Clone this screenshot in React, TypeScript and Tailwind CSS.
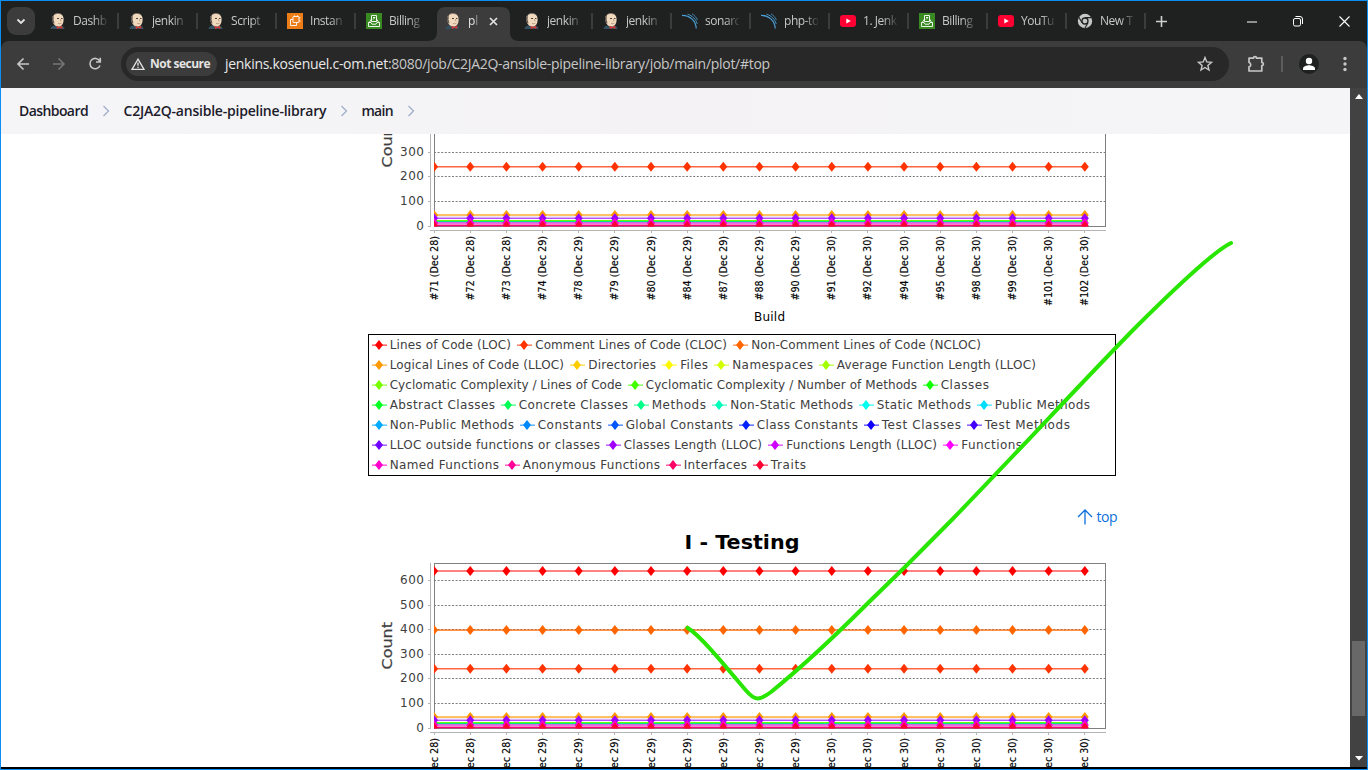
import React from "react";

const BUILDS = [
  "#71 (Dec 28)", "#72 (Dec 28)", "#73 (Dec 28)", "#74 (Dec 29)", "#78 (Dec 29)", "#79 (Dec 29)", "#80 (Dec 29)",
  "#84 (Dec 29)", "#87 (Dec 29)", "#88 (Dec 29)", "#90 (Dec 29)", "#91 (Dec 30)", "#92 (Dec 30)", "#94 (Dec 30)",
  "#95 (Dec 30)", "#98 (Dec 30)", "#99 (Dec 30)", "#101 (Dec 30)", "#102 (Dec 30)",
];

type Series = { h: number; color: string; w: number; marker: boolean; o: number };

// h is the height of the series above the zero line, in chart pixels
const SERIES: Series[] = [
  { h: 157.5, color: "#ff0000", w: 1.6, marker: true, o: 0.65 },
  { h: 59.7, color: "#ff3300", w: 1.6, marker: true, o: 0.75 },
  { h: 98.4, color: "#ff6600", w: 1.6, marker: true, o: 0.7 },
  { h: 11.5, color: "#ff9900", w: 1.8, marker: true, o: 0.6 },
  { h: 6, color: "#66ff00", w: 1.2, marker: false, o: 1 },
  { h: 5, color: "#00e68a", w: 1.2, marker: false, o: 1 },
  { h: 9.4, color: "#c8a0e8", w: 1, marker: false, o: 0.7 },
  { h: 8.2, color: "#9900ff", w: 1.2, marker: true, o: 0.7 },
  { h: 3.6, color: "#b050e0", w: 1.4, marker: false, o: 0.9 },
  { h: 3.4, color: "#ff00cc", w: 1, marker: true, o: 0.6 },
  { h: 1, color: "#ff0080", w: 2, marker: false, o: 1 },
  { h: 0.8, color: "#ff0033", w: 0, marker: true, o: 1 },
];

type Item = [marker: number, start: number, end: number, label: string, color: string];

const LEGEND: Item[][] = [
  [
    [379, 390, 510.5, "Lines of Code (LOC)", "#ff0000"],
    [524, 535.5, 726.5, "Comment Lines of Code (CLOC)", "#ff3300"],
    [740, 751.5, 980.5, "Non-Comment Lines of Code (NCLOC)", "#ff6600"],
  ],
  [
    [379, 390, 563.5, "Logical Lines of Code (LLOC)", "#ff9900"],
    [577, 588.5, 655.5, "Directories", "#ffcc00"],
    [669, 680.5, 707.5, "Files", "#fff700"],
    [721, 732.5, 812.5, "Namespaces", "#d4ff00"],
    [826, 837, 1035.5, "Average Function Length (LLOC)", "#a2ff00"],
  ],
  [
    [379, 390, 621.5, "Cyclomatic Complexity / Lines of Code", "#77ff00"],
    [635, 646, 916.5, "Cyclomatic Complexity / Number of Methods", "#44ff00"],
    [930, 941, 988.5, "Classes", "#11ff00"],
  ],
  [
    [379, 390, 494.5, "Abstract Classes", "#00ff22"],
    [508, 519, 627.5, "Concrete Classes", "#00ff55"],
    [641, 652, 705.5, "Methods", "#00ff88"],
    [719, 730.5, 852.5, "Non-Static Methods", "#00ffbb"],
    [866, 877, 970.5, "Static Methods", "#00ffee"],
    [984, 995, 1089.5, "Public Methods", "#00ddff"],
  ],
  [
    [379, 390, 513.5, "Non-Public Methods", "#00aaff"],
    [527, 538, 601.5, "Constants", "#0088ff"],
    [615, 626, 732.5, "Global Constants", "#0055ff"],
    [746, 757, 857.5, "Class Constants", "#0022ff"],
    [871, 882, 960.5, "Test Classes", "#1100ff"],
    [974, 985, 1069.5, "Test Methods", "#4400ff"],
  ],
  [
    [379, 390, 599.5, "LLOC outside functions or classes", "#7000ff"],
    [613, 624, 761.5, "Classes Length (LLOC)", "#a200ff"],
    [775, 786.5, 936.5, "Functions Length (LLOC)", "#d000ff"],
    [950, 961.5, 1021.5, "Functions", "#ff00ff"],
  ],
  [
    [379, 390, 498.5, "Named Functions", "#ff00cc"],
    [512, 523, 659.5, "Anonymous Functions", "#ff0099"],
    [673, 684, 746.5, "Interfaces", "#ff0066"],
    [760, 771, 805.5, "Traits", "#ff0033"],
  ],
];

const DIAMOND = "M0 -5 L4 0 L0 5 L-4 0Z";

/** One plot image; its own origin is 368px left of the page and its zero line is at y = 198.5. */
function Plot({ id, title }: { id: string; title?: string }) {
  const zero = 198.5;
  const px = (i: number) => 66.1 + i * 36.15;
  return (
    <svg width="748" height="448" viewBox="0 0 748 448" className="block shrink-0" fontFamily="'DejaVu Sans', sans-serif">
      <defs>
        <clipPath id={id}>
          <rect x="66" y="33" width="672" height="165.5" />
        </clipPath>
      </defs>
      {title && (
        <text x="316.500" y="19" fontSize="20" fontWeight="700" textLength="115" lengthAdjust="spacingAndGlyphs">{title}</text>
      )}
      <text transform="translate(24 139.5) rotate(-90)" fontSize="14" fill="#404040" stroke="#404040" strokeWidth="0.2" textLength="47.500" lengthAdjust="spacingAndGlyphs">Count</text>
      <path d={`M62.5 33V${zero + 0.5}`} stroke="#b4b4b4" />
      <path d="M62 202.5H738" stroke="#b4b4b4" />
      {[0, 25, 50, 74, 99, 123, 148].map((d, i) => (
        <g key={d}>
          <path d={`M60 ${zero - d}H62`} stroke="#b4b4b4" />
          {i > 0 && <path d={`M66 ${zero - d}H738`} stroke="#7c7c7c" strokeDasharray="2 1.6" />}
          <text x="56" y={zero - d + 3.5} fontSize="12" fill="#404040" textAnchor="end" textLength={i ? 24 : 7.8}>{i * 100}</text>
        </g>
      ))}
      <rect x="66.5" y="33.5" width="671" height="165" fill="none" stroke="#808080" />
      <g clipPath={`url(#${id})`}>
        {SERIES.map((s, k) => (
          <g key={k}>
            {s.w > 0 && <path d={`M66.5 ${zero - s.h}H${px(18) + 3}`} stroke={s.color} strokeWidth={s.w} opacity={s.o} />}
            {s.marker && BUILDS.map((_, i) => (
              <path key={i} d={DIAMOND} fill={s.color} transform={`translate(${px(i)} ${zero - s.h})`} />
            ))}
          </g>
        ))}
      </g>
      {BUILDS.map((b, i) => (
        <g key={b}>
          <path d={`M${Math.floor(px(i)) + 0.5} 203V205`} stroke="#b4b4b4" />
          <text transform={`translate(${px(i) + 3.5} ${b.length > 12 ? 278 : 272.5}) rotate(-90)`} fontSize="10" stroke="#000" strokeWidth="0.15" lengthAdjust="spacingAndGlyphs" textLength={b.length > 12 ? 70 : 64.5}>{b}</text>
        </g>
      ))}
      <text x="386" y="293" fontSize="12" textLength="31">Build</text>
      <rect x="0.5" y="306.5" width="747" height="141" fill="#fff" stroke="#000" />
      {LEGEND.map((row, r) =>
        row.map(([m, s, e, label, color]) => (
          <g key={label} transform={`translate(-368 ${r * 20})`}>
            <path d={`M${m - 7} 317.2H${m + 8}`} stroke={color} strokeWidth="1.6" opacity="0.6" />
            <path d={DIAMOND} fill={color} transform={`translate(${m} 317)`} />
            <text x={s - 0.3} y="321" fontSize="12" fill="#404040" textLength={e - s + 0.8}>{label}</text>
          </g>
        )),
      )}
    </svg>
  );
}

function Jenkins() {
  return (
    <svg width="16" height="16" viewBox="0 0 16 16">
      <path d="M.5 16c0-2 2-3.4 4.500-3.400l6-.2c2.500.2 3.500 1.800 3.500 3.600z" fill="#335061" />
      <path d="M2.200 7C1.500 3.200 4 .5 7.800.4c4.200 0 6.200 2.800 5.800 6.600-.1 3.800-2 6.600-4.800 6.600C5.500 13.600 3.100 11.500 2.200 7z" fill="#f0d9bd" />
      <path d="M2.500 8.500C1.300 5 2.400 2.200 4.600 1 3.600 2.500 3.400 4 3.800 5.500c-.5.600-.4 1.400 0 2l.7 3C3.500 10 2.800 9.400 2.500 8.500z" fill="#5a514b" />
      <path d="M4.200 1.500C6.500-.1 10.500.1 12.400 2.200" stroke="#8f8478" strokeWidth=".7" fill="none" />
      <path d="M7 5.500h2M11 5.500h1.500" stroke="#4b403a" strokeWidth="1" fill="none" />
      <path d="M8 10.300c1.200.6 2.400.5 3.400-.1M10.400 6.200l.6 2.200" stroke="#a98a70" strokeWidth=".8" fill="none" />
      <path d="M6.500 12.700l2.700 1.200 3-1.200.3 3.100-3.200-.9-2.400 1z" fill="#d33833" />
    </svg>
  );
}

function Ec2() {
  return (
    <svg width="16" height="16" viewBox="0 0 16 16">
      <rect width="16" height="16" fill="#ed7d16" />
      <g fill="none" stroke="#fff" strokeWidth=".9">
        <rect x="6" y="3.500" width="6" height="6" rx=".5" />
        <path d="M6 6.500H3.500v6h6V9.500M7.500 3.500v-1.200M10.500 3.500v-1.200M12 5h1.500M12 8h1.500" />
      </g>
    </svg>
  );
}

function Billing() {
  return (
    <svg width="16" height="16" viewBox="0 0 16 16">
      <rect width="16" height="16" fill="#3a8a24" />
      <g fill="none" stroke="#fff" strokeWidth=".9">
        <path d="M5.500 8.500v-6h5v6zM7 6.500l2-2M7 4.500h2" />
        <path d="M5.500 6L3.300 9.500M10.500 6l2.200 3.500M2.500 9.500v4h11v-4H11l-1 1.700H6L5 9.500z" />
      </g>
    </svg>
  );
}

function Sonar() {
  return (
    <svg width="16" height="16" viewBox="0 0 16 16" fill="none" stroke="#4b9fd5">
      <path d="M0 2.300C7.500 2.200 14 7.500 14.200 15.500" strokeWidth="1.200" />
      <path d="M5.500 1.200C10.500 2.800 14 6.200 15.200 11" strokeWidth=".9" />
      <path d="M10 .8c2.500 1.500 4.300 3.500 5.400 6.200" strokeWidth=".8" />
    </svg>
  );
}

function YouTube() {
  return (
    <svg width="16" height="16" viewBox="0 0 16 16">
      <rect y="2" width="16" height="12" rx="3" fill="#ff0033" />
      <path d="M6.300 5.400v5.200L10.800 8z" fill="#fff" />
    </svg>
  );
}

function Chrome() {
  return (
    <svg width="16" height="16" viewBox="0 0 16 16">
      <circle cx="8" cy="8" r="7.200" fill="#c7c7c7" />
      <circle cx="8" cy="8" r="3" fill="#c7c7c7" stroke="#1f2020" strokeWidth="1.300" />
      <path d="M8 4.600H14.300M5 9.700L1.900 4.300M11 9.700L7.900 15.200" stroke="#1f2020" strokeWidth="1.100" />
    </svg>
  );
}

const TABS = [
  { icon: <Jenkins />, text: "Dashb" },
  { icon: <Jenkins />, text: "jenkin" },
  { icon: <Jenkins />, text: "Script" },
  { icon: <Ec2 />, text: "Instan" },
  { icon: <Billing />, text: "Billing" },
  { icon: <Jenkins />, text: "pl", active: true },
  { icon: <Jenkins />, text: "jenkin" },
  { icon: <Jenkins />, text: "jenkin" },
  { icon: <Sonar />, text: "sonarc" },
  { icon: <Sonar />, text: "php-to" },
  { icon: <YouTube />, text: "1. Jenk" },
  { icon: <Billing />, text: "Billing" },
  { icon: <YouTube />, text: "YouTu" },
  { icon: <Chrome />, text: "New T" },
];

function TabStrip() {
  return (
    <div className="flex h-10 shrink-0 bg-[#1f2020]">
      <div className="mt-1.5 ml-1.5 flex h-7 w-7 shrink-0 items-center justify-center rounded-[9px] bg-[#3c3c3c]">
        <svg width="10" height="7" viewBox="0 0 10 7" fill="none" stroke="#e3e3e3" strokeWidth="1.800"><path d="M1.500 1.500L5 5l3.500-3.500" /></svg>
      </div>
      <div className="ml-[5px] flex">
        {TABS.map((t, i) =>
          t.active ? (
            <div key={i} className="relative w-[79px]">
              <svg className="absolute -left-2 top-1.5" width="92" height="34" viewBox="0 0 92 34">
                <path d="M0 34C7 34 10 31 10 25V9C10 3 13 0 19 0H74C80 0 83 3 83 9V25C83 31 86 34 92 34Z" fill="#3c3c3c" />
              </svg>
              <div className="relative flex h-full items-center pl-2.5">
                {t.icon}
                <span className="ml-[7px] w-[11px] overflow-hidden whitespace-nowrap text-[12px] text-[#e3e3e3] [mask-image:linear-gradient(to_right,black_60%,transparent_100%)]">{t.text}</span>
                <svg className="ml-[10px]" width="9" height="9" viewBox="0 0 9 9" stroke="#e3e3e3" strokeWidth="1.700"><path d="M1 1l7 7M8 1L1 8" /></svg>
              </div>
            </div>
          ) : (
            <div key={i} className="flex w-[79px] items-center pl-2.5">
              {t.icon}
              <span className="ml-[7px] w-[34px] overflow-hidden whitespace-nowrap text-[12px] tracking-[-0.450px] text-[#c7c7c7] [mask-image:linear-gradient(to_right,black_60%,transparent_105%)]">{t.text}</span>
              {i !== 4 && <span className="ml-[10px] h-4 w-[2px] bg-[#3c3c3c]" />}
            </div>
          ),
        )}
      </div>
      <svg className="mt-[15px] ml-[10px]" width="11" height="11" viewBox="0 0 11 11" stroke="#d0d0d0" strokeWidth="1.600"><path d="M5.500 0v11M0 5.500h11" /></svg>
      <svg className="mt-[14.500px] ml-auto mr-[16px]" width="104" height="12" viewBox="0 0 104 12" fill="none" stroke="#fff">
        <path d="M0 6h10" />
        <rect x="46.500" y="2.500" width="7" height="7.500" rx="1.500" />
        <path d="M48.500 .500H53a2.500 2.500 0 0 1 2.500 2.500V8" />
        <path d="M92.500 .500l10 10M102.500 .500l-10 10" strokeWidth="1.100" />
      </svg>
    </div>
  );
}

function Toolbar() {
  return (
    <div className="shrink-0 bg-[#1f2020]">
      <div className="flex h-[47px] items-center rounded-t-lg bg-[#3c3c3c] pb-px">
        <svg className="ml-4 shrink-0" width="86" height="14" viewBox="0 0 86 14" fill="none" strokeWidth="1.600">
          <path d="M12 7H1.200M6.500 1.500L1 7l5.500 5.500" stroke="#c7c7c7" />
          <path d="M36 7h10.800M41.500 1.500L47 7l-5.500 5.500" stroke="#757575" />
          <path d="M82.700 4A5.200 5.200 0 1 0 83 8.500M83.300 .800v4.200h-4.300" stroke="#c7c7c7" />
        </svg>
        <div className="ml-[18px] flex h-[34px] w-[1108px] items-center rounded-full bg-[#282828] pl-[5px]">
          <div className="flex h-6 w-[91px] shrink-0 items-center rounded-full bg-[#3c3c3c] pl-[5px]">
            <svg width="14" height="12" viewBox="0 0 14 12" fill="none" stroke="#e3e3e3" strokeWidth="1.300"><path d="M7 1.200L13 11.300H1zM7 4.500v3.200M7 8.700v1.300" /></svg>
            <span className="ml-[5px] whitespace-nowrap text-[12px] font-bold tracking-[-0.500px] text-[#e3e3e3]">Not secure</span>
          </div>
          <div className="ml-2 pb-px whitespace-nowrap text-[14px] tracking-[-0.288px] text-[#c7c7c7]">
            <span className="text-[#e8e8e8]">jenkins.kosenuel.c-om.net</span>:8080/job/C2JA2Q-ansible-pipeline-library/job/main/plot/#top
          </div>
          <svg className="mr-4 ml-auto" width="16" height="16" viewBox="0 0 16 16" fill="none" stroke="#c7c7c7" strokeWidth="1.400">
            <path d="M8 1.500l1.800 4.400 4.700.4-3.600 3.100 1.100 4.600L8 11.500 4 14l1.100-4.600L1.500 6.300l4.700-.4z" />
          </svg>
        </div>
        <svg className="ml-[18px]" width="18" height="18" viewBox="0 0 18 18" fill="none" stroke="#c7c7c7" strokeWidth="1.700">
          <path d="M2 3.200h4.500a1.500 1.500 0 0 1 3 0H14.800v4.300a1.500 1.500 0 0 1 0 3.200v5.300H2v-4.200a2.200 2.200 0 0 0 0-4.300z" strokeLinejoin="round" />
        </svg>
        <span className="ml-[16px] h-4 w-[2px] bg-[#5c5c5c]" />
        <svg className="ml-[16px]" width="20" height="20" viewBox="0 0 20 20">
          <circle cx="10" cy="10" r="10" fill="#1f2020" />
          <circle cx="10" cy="7" r="3.200" fill="#fff" />
          <path d="M4 16v-1.500c0-2.500 4-3.300 6-3.300s6 .8 6 3.300V16z" fill="#fff" />
        </svg>
        <svg className="ml-6" width="4" height="16" viewBox="0 0 4 16" fill="#c7c7c7">
          <circle cx="2" cy="2.500" r="1.700" /><circle cx="2" cy="8" r="1.700" /><circle cx="2" cy="13.500" r="1.700" />
        </svg>
      </div>
    </div>
  );
}

function Chevron() {
  return (
    <svg width="8" height="12" viewBox="0 0 8 12" fill="none" stroke="#9fb0ca" strokeWidth="1.300"><path d="M1.500 1l5 5-5 5" /></svg>
  );
}

export default function App() {
  return (
    <div className="relative flex h-[770px] w-[1368px] flex-col overflow-hidden border border-[#0c8cf5] bg-white font-['Open_Sans','Noto_Sans',sans-serif]">
      <TabStrip />
      <Toolbar />
      <div className="flex min-h-0 flex-1 border-b-2 border-black">
        <main className="flex w-[1349px] flex-col overflow-hidden">
          <nav className="z-10 flex h-[46px] shrink-0 items-center bg-gradient-to-r from-[#f5f5f8] via-[#f4f2f4] to-[#f5f5f8] pb-px pl-[18px] text-[14px] font-semibold text-[#1c1c2b]">
            <span className="w-[83px] tracking-[-0.580px]">Dashboard</span>
            <Chevron />
            <span className="ml-[13.500px] w-[216.500px] whitespace-nowrap tracking-[-0.220px]">C2JA2Q-ansible-pipeline-library</span>
            <Chevron />
            <span className="ml-[13.500px] w-[45.500px] tracking-[-0.750px]">main</span>
            <Chevron />
          </nav>
          <div className="flex min-h-0 flex-1 flex-col overflow-hidden pl-[367px]">
            <div className="-mt-[106px] shrink-0"><Plot id="upper" /></div>
            <div className="flex h-[54px] w-[749px] shrink-0 items-end justify-end pb-[3.500px]">
              <a className="flex items-center text-[14px] leading-5 tracking-[-0.500px] text-[#0b6fdc]">
                <svg className="mr-1" width="16" height="16" viewBox="0 0 16 16" fill="none" stroke="#0b6fdc" strokeWidth="1.300"><path d="M8 15.500V1M1 8l7-7 7 7" /></svg>
                top
              </a>
            </div>
            <Plot id="lower" title="I - Testing" />
          </div>
        </main>
        <aside className="flex w-[17px] flex-col items-center bg-[#424242]">
          <svg className="mt-[6px]" width="8" height="5" viewBox="0 0 8 5"><path d="M0 5L4 0l4 5z" fill="#fff" /></svg>
          <div className="mt-[542px] h-[75px] w-[13px] bg-[#686868]" />
          <svg className="mt-[40px]" width="8" height="5" viewBox="0 0 8 5"><path d="M0 0l4 4.500L8 0z" fill="#fff" /></svg>
        </aside>
      </div>
      <svg className="pointer-events-none absolute -top-px -left-px" width="1368" height="770" viewBox="0 0 1368 770" fill="none">
        <path d="M687.500 627.800C702 637 726 667 746 690.500C755 701 759 701 771 692C797 671 832 639 868 603L904.500 567.500L951.700 520C1010 460 1085 379 1133 330C1170 293 1212 252 1231 243" stroke="#28e600" strokeWidth="4" strokeLinecap="round" />
      </svg>
    </div>
  );
}
